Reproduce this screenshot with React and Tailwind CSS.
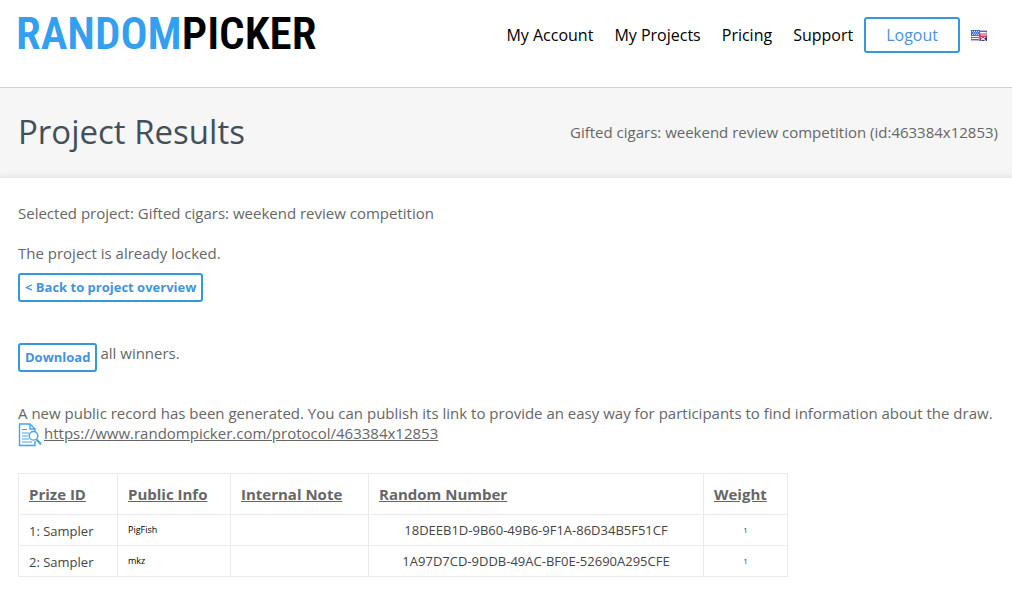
import React from "react";

const navLinks = ["My Account", "My Projects", "Pricing", "Support"];

const columns = [
  { title: "Prize ID", width: "w-[99px]" },
  { title: "Public Info", width: "w-[113px]" },
  { title: "Internal Note", width: "w-[138px]" },
  { title: "Random Number", width: "w-[335px]" },
  { title: "Weight", width: "w-[84px]" },
];

const winners = [
  { prize: "1: Sampler", info: "PigFish", note: "", number: "18DEEB1D-9B60-49B6-9F1A-86D34B5F51CF", weight: 1 },
  { prize: "2: Sampler", info: "mkz", note: "", number: "1A97D7CD-9DDB-49AC-BF0E-52690A295CFE", weight: 1 },
];

function FlagIcon() {
  return (
    <svg width="16" height="11" viewBox="0 0 16 11" aria-hidden="true">
      <rect width="16" height="11" fill="#f4f4fa" />
      <path d="M8 1.5h8M8 4h8M0 7.5h8M0 9.5h8" stroke="#d8434d" strokeWidth="1.2" />
      <rect width="9" height="6" fill="#3f74d8" />
      <path d="M1 1.5h7M2 3h6M1 4.5h7" stroke="#dfe8fb" strokeWidth="0.9" strokeDasharray="1 1" />
      <path d="M9 6.5h7V11H9z" fill="#23285f" />
      <path d="M9 11l6-4.5M9 6.5l6 4.5" stroke="#f4eef4" strokeWidth="1.2" />
      <path d="M9 4v7M8 6.2h8" stroke="#d03a48" strokeWidth="1.4" />
      <rect x="0.5" y="0.5" width="15" height="10" fill="none" stroke="#54508c" strokeOpacity="0.35" />
    </svg>
  );
}

function RecordIcon() {
  return (
    <svg width="24" height="24" viewBox="0 0 24 24" fill="none" stroke="#43a5e8" strokeWidth="1.4" className="shrink-0" aria-hidden="true">
      <path d="M17 8V6l-5-5H1.5v21.5H17V18" />
      <path d="M12 1v5h5" />
      <path d="M4 6.5h5M4 10h7M4 13h6M4 16h7M4 19h10" strokeWidth="1.2" />
      <circle cx="15.5" cy="12.8" r="4.3" fill="#fff" />
      <path d="M18.5 16.5l4.5 4.8" strokeWidth="2.2" />
    </svg>
  );
}

function OutlineButton({ children }) {
  return (
    <button
      type="button"
      className="rounded-[3px] border-2 border-[#3498db] bg-white px-[5px] pt-0.5 pb-[3px] text-[13px] leading-5 font-bold text-[#4394dc]"
    >
      {children}
    </button>
  );
}

export default function App() {
  return (
    <div className="min-h-screen bg-white font-['Open_Sans',sans-serif] text-[15px] leading-5 text-[#666]">
      {/* Header */}
      <header className="flex items-start justify-between border-b border-[#d3d3d3] pt-[17px] pr-[25px] pb-[34px] pl-4">
        <a
          href="#"
          className="font-['Roboto_Condensed',Roboto,sans-serif] text-[45px] leading-[34px] font-semibold text-black"
        >
          <span className="text-[#339ff0]">RANDOM</span>PICKER
        </a>
        <nav className="flex items-center text-base leading-6 text-black">
          <div className="flex gap-[21px]">
            {navLinks.map((link) => (
              <a key={link} href="#">
                {link}
              </a>
            ))}
          </div>
          <a
            href="#"
            className="ml-[11px] rounded-[3px] border-2 border-[#3498db] px-5 py-1 text-[#4a94dc]"
          >
            Logout
          </a>
          <a href="#" aria-label="Language" className="ml-[11px]">
            <FlagIcon />
          </a>
        </nav>
      </header>

      {/* Page title */}
      <section className="flex items-center justify-between bg-[#f6f6f6] pt-5 pr-3.5 pb-[22px] pl-[18px] shadow-[inset_0_-6px_5px_-4px_#e2e2e2]">
        <h1 className="text-[33px] leading-[48px] text-[#434f59]">Project Results</h1>
        <p>Gifted cigars: weekend review competition (id:463384x12853)</p>
      </section>

      {/* Results */}
      <main className="px-[18px] pt-[25px] pb-3">
        <p>Selected project: Gifted cigars: weekend review competition</p>
        <p className="mt-5 mb-2.5">The project is already locked.</p>
        <OutlineButton>&lt; Back to project overview</OutlineButton>

        <div className="mt-[41px] flex items-start gap-[3px]">
          <OutlineButton>Download</OutlineButton>
          <span>all winners.</span>
        </div>

        <p className="mt-[31px]">
          A new public record has been generated. You can publish its link to provide an easy way for participants to find information about the draw.
        </p>
        <div className="flex items-start gap-0.5">
          <RecordIcon />
          <a href="#" className="underline">
            https://www.randompicker.com/protocol/463384x12853
          </a>
        </div>

        <table className="mt-[26px] table-fixed border-collapse text-[13px] text-[#444]">
          <thead>
            <tr className="h-[41px]">
              {columns.map((col) => (
                <th
                  key={col.title}
                  className={`${col.width} border border-[#ebebeb] px-2.5 text-left text-[15px] font-bold text-[#666]`}
                >
                  <a href="#" className="underline">
                    {col.title}
                  </a>
                </th>
              ))}
            </tr>
          </thead>
          <tbody>
            {winners.map((row) => (
              <tr key={row.prize} className="h-[31px]">
                <td className="border border-[#ebebeb] px-2.5 pt-0.5">{row.prize}</td>
                <td className="border border-[#ebebeb] px-2.5 text-[9px] text-black">{row.info}</td>
                <td className="border border-[#ebebeb] px-2.5">{row.note}</td>
                <td className="border border-[#ebebeb] px-2.5 text-center">{row.number}</td>
                <td className="border border-[#ebebeb] px-2.5 text-center text-[8px]">{row.weight}</td>
              </tr>
            ))}
          </tbody>
        </table>
      </main>
    </div>
  );
}
